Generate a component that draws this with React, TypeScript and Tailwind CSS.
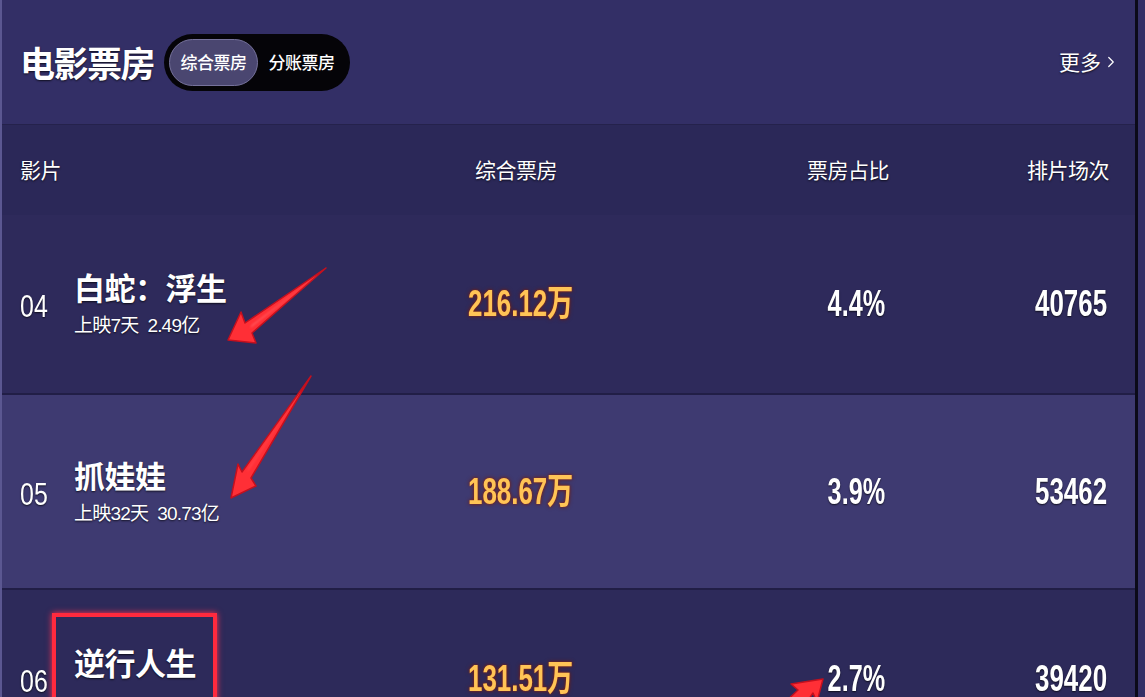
import { ChevronRight } from 'lucide-react';

const rows = [
  { no: '04', title: '白蛇：浮生', days: '上映7天', total: '2.49亿', box: '216.12', ratio: '4.4%', shows: '40765', bg: 'bg-[#2e2a5b]', h: 'h-[180px]' },
  { no: '05', title: '抓娃娃', days: '上映32天', total: '30.73亿', box: '188.67', ratio: '3.9%', shows: '53462', bg: 'bg-[#3e3a71]', h: 'h-[195px]' },
  { no: '06', title: '逆行人生', days: '', total: '', box: '131.51', ratio: '2.7%', shows: '39420', bg: 'bg-[#2d2a5a]', h: 'h-[180px]' },
];

const cjk = "font-['Noto_Sans_CJK_SC',sans-serif]";
const num = "font-['Liberation_Sans','Noto_Sans_CJK_SC',sans-serif]";
const glow = '[text-shadow:0_1px_2px_rgba(0,0,0,0.7)]';

const App = () => {
  return (
    <div className="relative w-[1145px] h-[697px] overflow-hidden bg-[#332f66]">
      <div className="w-[1138px] h-full border-l-2 border-l-[#5b5791] border-r-[3px] border-r-[#0b0a18] text-white">
        {/* header */}
        <div className="h-[125px] flex items-center pl-[18px] pr-[15px] bg-[#332f66] border-b border-[#25224c]">
          <h1 className={`${cjk} text-[35px] font-bold tracking-[-1.5px] ${glow}`}>电影票房</h1>
          <div className="ml-[10px] h-[57px] w-[186px] rounded-full bg-[#050408] flex items-center px-[5px]">
            <div className={`${cjk} h-[47px] w-[89px] rounded-full bg-[#4a4670] border border-[#76729c] flex items-center justify-center text-[17px] font-medium tracking-[-0.5px]`}>
              综合票房
            </div>
            <div className={`${cjk} flex-1 text-center text-[17px] font-medium tracking-[-0.5px]`}>分账票房</div>
          </div>
          <div className={`ml-auto flex items-center ${cjk} text-[21px] ${glow}`}>
            更多
            <ChevronRight size={18} strokeWidth={1.6} className="ml-[1px]" />
          </div>
        </div>

        {/* column titles */}
        <div className={`h-[90px] flex items-center pl-[18px] pr-[28px] bg-[#2b2858] ${cjk} text-[21px] tracking-[-0.5px] ${glow}`}>
          <div className="w-[446px]">影片</div>
          <div className="flex-1 pl-[9px]">综合票房</div>
          <div className="w-[200px] text-right -mr-[2px]">票房占比</div>
          <div className="w-[222px] text-right -mr-[2px]">排片场次</div>
        </div>

        {rows.map((r) => (
          <div key={r.no} className={`${r.h} ${r.bg} flex items-center pl-[18px] pr-[28px] border-b-2 border-[#211e46]`}>
            <div className="w-[54px] pt-[4px]">
              <span className={`inline-block ${num} text-[32px] scale-x-[0.78] origin-left ${glow}`}>{r.no}</span>
            </div>
            <div className="w-[394px] flex flex-col">
              <div className={`${cjk} text-[31px] font-bold leading-[40px] tracking-[-0.5px] ${glow}`}>{r.title}</div>
              <div className={`${num} mt-[4px] h-[30px] text-[19px] leading-[30px] tracking-[-0.8px] ${glow}`}>
                {r.days}
                {r.total && <span className="ml-[9px]">{r.total}</span>}
              </div>
            </div>
            <div className="flex-1">
              <span className={`inline-block ${num} font-bold text-[36px] scale-x-[0.72] origin-left text-[#ffc456] [text-shadow:0_0_2px_#9a2c12,0_0_5px_#6a1c10]`}>
                {r.box}万
              </span>
            </div>
            <div className="w-[200px] text-right">
              <span className={`inline-block ${num} font-bold text-[36px] scale-x-[0.7] origin-right ${glow}`}>{r.ratio}</span>
            </div>
            <div className="w-[222px] text-right">
              <span className={`inline-block ${num} font-bold text-[36px] scale-x-[0.72] origin-right ${glow}`}>{r.shows}</span>
            </div>
          </div>
        ))}
      </div>

      {/* annotations drawn over the screenshot */}
      <div className="absolute left-[52px] top-[613px] w-[165px] h-[110px] border-[4px] border-[#ff2a3e] shadow-[0_0_6px_#ff3050]" />
      <svg className="absolute inset-0 pointer-events-none" width="1145" height="697" viewBox="0 0 1145 697">
        <defs>
          <filter id="g" x="-20%" y="-20%" width="140%" height="140%">
            <feGaussianBlur stdDeviation="1.2" />
          </filter>
        </defs>
        <g fill="#ff2f36" stroke="#c4101e" strokeWidth="1.5" strokeLinejoin="round">
          <path d="M326,268 L252,333 L256,343 L228,340 L241,312 L245,323 Z" />
          <path d="M311,376 L251,478 L256,486 L231,498 L238,464 L242,472 Z" />
          <path d="M823,679 L791,684 L798,690 L782,705 L800,712 L813,693 L817,702 Z" />
        </g>
        <g fill="#ff8a8a" opacity="0.7" filter="url(#g)">
          <path d="M322,272 L250,328 L252,325 Z" />
          <path d="M308,381 L247,472 L249,468 Z" />
        </g>
      </svg>
    </div>
  );
};

export default App;
